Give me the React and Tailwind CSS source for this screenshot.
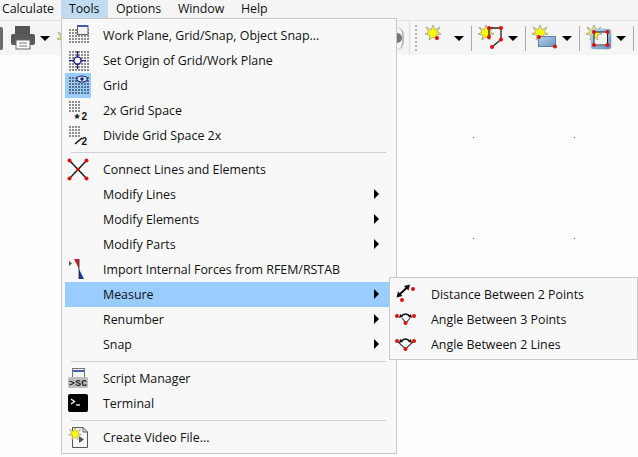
const MENUS = [
  { name: "Calculate", cls: "w-[61px] pl-[2px]" },
  { name: "Tools", cls: "w-[47px] pl-[8px] bg-[#bfdcf2]" },
  { name: "Options", cls: "w-[62px] pl-[8px]" },
  { name: "Window", cls: "w-[63px] pl-[8px]" },
  { name: "Help", cls: "w-[45px] pl-[8px]" },
];

// dotted grid used by the first few menu icons
function Dots({ x = 0, y = 0, cols = 7, rows = 7, fill = "#8d8d8d" }) {
  const out = [];
  for (let r = 0; r < rows; r++) {
    for (let c = 0; c < cols; c++) {
      out.push(<rect key={`${r}-${c}`} x={x + c * 3} y={y + r * 3} width="2" height="2" fill={fill} />);
    }
  }
  return <>{out}</>;
}

function Icon({ children }) {
  return (
    <svg width="24" height="24" viewBox="0 0 24 24" className="block overflow-visible">
      {children}
    </svg>
  );
}

const Red = ({ x, y, r = 2 }) => <circle cx={x} cy={y} r={r} fill="#e01010" />;

const Star = ({ x, y, s = 1 }) => (
  <polygon
    transform={`translate(${x} ${y}) scale(${s})`}
    points="0,-8 2,-3 7,-6 4,-1 8,1 3,2 4,7 0,4 -4,7 -3,2 -8,1 -4,-1 -7,-6 -2,-3"
    fill="#ffff00"
    stroke="#9a9a9a"
    strokeWidth="0.8"
  />
);

const WorkPlaneIcon = () => (
  <Icon>
    <Dots x={3} y={5} rows={5} />
    <rect x="11.5" y="1.5" width="10.5" height="9" fill="#f4f4f4" stroke="#666" />
    <rect x="12" y="1" width="10" height="2" fill="#3b5fb0" />
  </Icon>
);
const OriginIcon = () => (
  <Icon>
    <Dots x={3} y={2} />
    <path d="M3 11.5H20M11.5 2V20" stroke="#1a1a8c" strokeWidth="1.2" />
    <circle cx="11.5" cy="11.5" r="3.6" fill="#f4f4f4" stroke="#1a1a8c" strokeWidth="1.4" />
  </Icon>
);
const GridIcon = () => (
  <Icon>
    <Dots x={3} y={3} rows={6} fill="#5d6f85" />
    <ellipse cx="16" cy="5" rx="5.2" ry="3" fill="#dfe7f2" stroke="#1c2a78" strokeWidth="1.2" />
    <circle cx="16" cy="5" r="1.8" fill="#1c2a78" />
  </Icon>
);
const Grid2xIcon = () => (
  <Icon>
    <Dots x={3} y={2} cols={4} rows={4} />
    <text x="8.5" y="24" fontSize="13" fontWeight="700" fontFamily="Liberation Sans, sans-serif" fill="#111">*</text>
    <text x="15.5" y="21" fontSize="10" fontWeight="700" fontFamily="Liberation Sans, sans-serif" fill="#111">2</text>
  </Icon>
);
const GridDivIcon = () => (
  <Icon>
    <Dots x={3} y={2} cols={4} rows={4} />
    <path d="M9 20L16 14" stroke="#111" strokeWidth="1.6" />
    <text x="15.5" y="21" fontSize="10" fontWeight="700" fontFamily="Liberation Sans, sans-serif" fill="#111">2</text>
  </Icon>
);
const ConnectIcon = () => (
  <Icon>
    <path d="M3.5 2.5L20.5 20.5M20.5 2.5L3.5 20.5" stroke="#222" strokeWidth="1.6" />
    <Red x={3.5} y={2.5} />
    <Red x={20.5} y={2.5} />
    <Red x={3.5} y={20.5} />
    <Red x={20.5} y={20.5} />
    <Red x={12} y={11.5} r={1.6} />
  </Icon>
);
const ImportIcon = () => (
  <Icon>
    <polygon points="3,3 6,5.5 3,8" fill="#555" />
    <polygon points="8,1 13,1 13,11" fill="#d0202a" />
    <polygon points="13,11 13,21 18,21" fill="#1c3f9c" />
    <path d="M13 1V21" stroke="#222" strokeWidth="0.8" />
  </Icon>
);
const ScriptIcon = () => (
  <Icon>
    <rect x="6.5" y="1.5" width="12" height="9" fill="#f4f4f4" stroke="#777" />
    <rect x="7" y="3" width="11" height="2" fill="#3f5fb8" />
    <rect x="2" y="10" width="20" height="11" rx="1.5" fill="#bdbdbd" />
    <text x="3" y="19" fontSize="9.5" fontWeight="700" fontFamily="Liberation Mono, monospace" fill="#222" textLength="18">&gt;SC</text>
  </Icon>
);
const TerminalIcon = () => (
  <Icon>
    <rect x="2" y="2" width="20" height="18" rx="2" fill="#000" />
    <path d="M5 7L8.5 9.5L5 12" stroke="#fff" strokeWidth="1.3" fill="none" />
    <path d="M10 13H14" stroke="#fff" strokeWidth="1.3" />
  </Icon>
);
const VideoIcon = () => (
  <Icon>
    <path d="M6.5 1.5H17L21.5 6V21.5H6.5Z" fill="#f7f7f7" stroke="#555" />
    <path d="M17 1.5V6H21.5" fill="none" stroke="#555" />
    <polygon points="13,10 18,13.5 13,17" fill="#555" />
    <Star x={9} y={8} s={0.8} />
  </Icon>
);
const DistanceIcon = () => (
  <Icon>
    <path d="M5 12L13.5 4" stroke="#111" strokeWidth="2" />
    <polygon points="2.5,14.5 4,8.5 8.5,13" fill="#111" />
    <polygon points="16,1.5 10,3 14.5,7.5" fill="#111" />
    <Red x={19} y={6} />
    <Red x={8} y={17} />
  </Icon>
);
const Angle3Icon = () => (
  <Icon>
    <path d="M8 10L12 15L16 10" stroke="#444" strokeWidth="1.2" fill="none" />
    <path d="M6.5 9Q11.5 3 16.5 9" stroke="#111" strokeWidth="1.4" fill="none" />
    <polygon points="5,10 6,6 9,8.5" fill="#111" />
    <polygon points="18,10 17,6 14,8.5" fill="#111" />
    <Red x={3} y={8} />
    <Red x={20} y={8} />
    <Red x={11.5} y={15} />
  </Icon>
);
const Angle2Icon = () => (
  <Icon>
    <path d="M3 8L11.5 16L20 8" stroke="#444" strokeWidth="1.2" fill="none" />
    <path d="M6.5 9Q11.5 3 16.5 9" stroke="#111" strokeWidth="1.4" fill="none" />
    <polygon points="5,10 6,6 9,8.5" fill="#111" />
    <polygon points="18,10 17,6 14,8.5" fill="#111" />
    <Red x={3} y={8} />
    <Red x={20} y={8} />
    <Red x={11.5} y={16} />
  </Icon>
);

function Caret() {
  return <div className="w-0 h-0 border-x-[5px] border-x-transparent border-t-[5px] border-t-black" />;
}

function Arrow() {
  return <div className="absolute right-[17px] top-[7px] w-0 h-0 border-y-[5px] border-y-transparent border-l-[5px] border-l-black" />;
}

function Sep() {
  return <div className="h-px bg-[#d0d0d0] ml-[6px] mr-[10px] my-[4px]" />;
}

function Row({ icon, label, arrow, active, checked }) {
  return (
    <div className={`relative h-[25px] flex items-center ${active ? "bg-[#99ccff]" : ""}`}>
      <div className={`w-[26px] h-[25px] flex items-center justify-center shrink-0 ${checked ? "bg-[#99ccff]" : ""}`}>
        {icon}
      </div>
      <span className="ml-[12px] pt-[2px] whitespace-nowrap">{label}</span>
      {arrow && <Arrow />}
    </div>
  );
}

function ToolBtn({ children }) {
  return (
    <div className="flex items-center h-[25px] w-[54px] shrink-0 border-r border-[#ababab]">
      <div className="w-[36px] h-[25px] flex items-center justify-center">{children}</div>
      <Caret />
    </div>
  );
}

export default function App() {
  return (
    <div
      className="relative w-[638px] h-[457px] overflow-hidden bg-[#fdfdfd] text-[12.4px] text-[#111] flex flex-col"
      style={{ fontFamily: '"Open Sans", "Noto Sans", sans-serif' }}
    >
      {/* menu bar */}
      <div className="h-[21px] bg-[#f5f5f5] flex border-b border-[#e3e3e3]">
        {MENUS.map((m) => (
          <div key={m.name} className={`h-[18px] flex items-center tracking-[-0.1px] ${m.cls}`}>
            {m.name}
          </div>
        ))}
      </div>

      {/* toolbar */}
      <div className="h-[34px] bg-[#f5f5f5] flex items-center">
        <div className="w-[3px] h-[23px] bg-[#6b6b6b] rounded-r-[2px]" />
        <svg width="26" height="26" viewBox="0 0 26 26" className="ml-[7px]">
          <rect x="5" y="1" width="15" height="8" fill="#555" />
          <rect x="1" y="9" width="24" height="11" rx="2" fill="#5a5a5a" />
          <rect x="6" y="15" width="14" height="9" fill="#fff" stroke="#666" />
          <path d="M9 18H17M9 21H17" stroke="#777" />
        </svg>
        <div className="ml-[4px]"><Caret /></div>
        <svg width="8" height="16" viewBox="0 0 8 16" className="ml-[7px]">
          <Star x={8} y={8} />
        </svg>
        <div className="ml-auto flex items-center self-stretch">
          <div className="w-[8px] h-[23px] mr-[5px] rounded-r-full border-r-2 border-[#bbbbbb] flex items-center">
            <div className="w-[6px] h-[10px] bg-[#777777] rounded-r-full" />
          </div>
          <div className="w-px self-stretch bg-[#dcdcdc]" />
          <div className="w-[2px] h-[26px] ml-[5px] mr-px border-l-2 border-dotted border-[#b5b5b5]" />
          <ToolBtn>
            <svg width="30" height="26" viewBox="0 0 30 26">
              <Star x={12} y={8} />
              <Red x={16} y={13} />
            </svg>
          </ToolBtn>
          <ToolBtn>
            <svg width="30" height="26" viewBox="0 0 30 26">
              <Star x={11} y={8} />
              <path d="M14 3H26V14.5L17 22M14 3V12" fill="none" stroke="#222" strokeWidth="1.3" />
              <Red x={14} y={3} />
              <Red x={26} y={3} />
              <Red x={14} y={12} />
              <Red x={26} y={14.5} />
              <Red x={17} y={22} />
            </svg>
          </ToolBtn>
          <ToolBtn>
            <svg width="30" height="26" viewBox="0 0 30 26">
              <defs>
                <linearGradient id="blueFill" x1="0" y1="0" x2="1" y2="1">
                  <stop offset="0" stopColor="#b4d2ea" />
                  <stop offset="1" stopColor="#6c94c0" />
                </linearGradient>
              </defs>
              <Star x={11} y={8} />
              <rect x="9.5" y="11.5" width="17" height="10" fill="url(#blueFill)" stroke="#5f7fa8" />
              <Red x={10} y={12} />
              <Red x={26} y={21.5} />
            </svg>
          </ToolBtn>
          <ToolBtn>
            <svg width="30" height="26" viewBox="0 0 30 26">
              <Star x={11} y={8} />
              <rect x="9.5" y="5.5" width="17" height="17" rx="1" fill="none" stroke="url(#blueFill)" strokeWidth="3.5" />
              <path d="M11 7H24.5V20H11Z" fill="none" stroke="#222" />
              <Red x={11} y={7} />
              <Red x={24.5} y={7} />
              <Red x={11} y={20} />
              <Red x={24.5} y={20} />
            </svg>
          </ToolBtn>
          <div className="w-[4px]" />
        </div>
      </div>

      {/* canvas */}
      <div className="relative flex-1 bg-[#fdfdfd]">
        <div className="absolute left-[473px] top-[82px] w-px h-px bg-[#555]" />
        <div className="absolute left-[574px] top-[82px] w-px h-px bg-[#555]" />
        <div className="absolute left-[473px] top-[183px] w-px h-px bg-[#555]" />
        <div className="absolute left-[574px] top-[183px] w-px h-px bg-[#555]" />
      </div>

      {/* tools dropdown */}
      <div className="absolute left-[61px] top-[18px] w-[336px] bg-[#f8f8f8] border border-[#c8c8c8] pl-[3px] pt-[4px] pb-[3px]">
        <Row icon={<WorkPlaneIcon />} label="Work Plane, Grid/Snap, Object Snap..." />
        <Row icon={<OriginIcon />} label="Set Origin of Grid/Work Plane" />
        <Row icon={<GridIcon />} label="Grid" checked />
        <Row icon={<Grid2xIcon />} label="2x Grid Space" />
        <Row icon={<GridDivIcon />} label="Divide Grid Space 2x" />
        <Sep />
        <Row icon={<ConnectIcon />} label="Connect Lines and Elements" />
        <Row label="Modify Lines" arrow />
        <Row label="Modify Elements" arrow />
        <Row label="Modify Parts" arrow />
        <Row icon={<ImportIcon />} label="Import Internal Forces from RFEM/RSTAB" />
        <Row label="Measure" arrow active />
        <Row label="Renumber" arrow />
        <Row label="Snap" arrow />
        <Sep />
        <Row icon={<ScriptIcon />} label="Script Manager" />
        <Row icon={<TerminalIcon />} label="Terminal" />
        <Sep />
        <Row icon={<VideoIcon />} label="Create Video File..." />
      </div>

      {/* measure submenu */}
      <div className="absolute left-[389px] top-[277px] w-[249px] bg-[#f8f8f8] border border-[#c8c8c8] pl-[3px] pt-[4px] pb-[2px]">
        <Row icon={<DistanceIcon />} label="Distance Between 2 Points" />
        <Row icon={<Angle3Icon />} label="Angle Between 3 Points" />
        <Row icon={<Angle2Icon />} label="Angle Between 2 Lines" />
      </div>
    </div>
  );
}
